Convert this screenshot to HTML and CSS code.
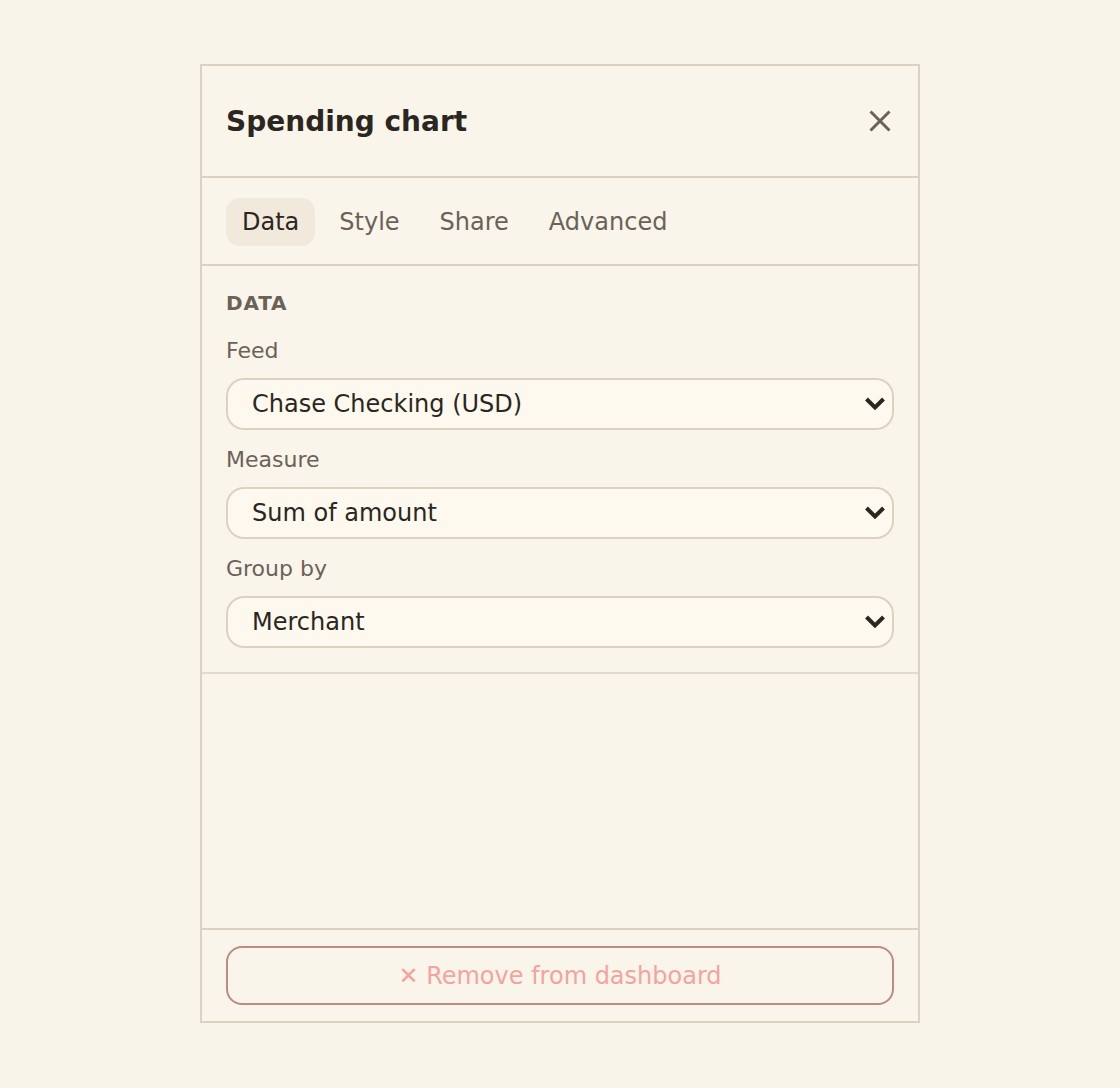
FILE: index.html
```html
<!DOCTYPE html>
<html lang="en">
<head>
    <meta charset="UTF-8">
    <meta name="viewport" content="width=device-width, initial-scale=1.0">
    <title>Spending chart</title>
    <link rel="stylesheet" href="styles.css">
</head>
<body>
    <div class="panel">
        <div class="panel-header">
            <h2>Spending chart</h2>
            <button class="close-btn" type="button" aria-label="Close">
                <svg width="28" height="28" viewBox="0 0 28 28">
                    <path d="M4.5 4.5 L23.5 23.5 M23.5 4.5 L4.5 23.5" stroke="#6b6257" stroke-width="3" fill="none"/>
                </svg>
            </button>
        </div>

        <div class="tabs">
            <button class="tab active" type="button">Data</button>
            <button class="tab" type="button">Style</button>
            <button class="tab" type="button">Share</button>
            <button class="tab" type="button">Advanced</button>
        </div>

        <div class="section">
            <div class="section-title">DATA</div>

            <div class="field">
                <label for="feed">Feed</label>
                <select id="feed">
                    <option>Chase Checking (USD)</option>
                </select>
            </div>

            <div class="field">
                <label for="measure">Measure</label>
                <select id="measure">
                    <option>Sum of amount</option>
                </select>
            </div>

            <div class="field">
                <label for="group-by">Group by</label>
                <select id="group-by">
                    <option>Merchant</option>
                </select>
            </div>
        </div>

        <div class="spacer"></div>

        <div class="panel-footer">
            <button class="remove-btn" type="button">✕ Remove from dashboard</button>
        </div>
    </div>
</body>
</html>
```

FILE: styles.css
```css
body {
    margin: 0;
    background-color: #f8f4ea;
    font-family: "DejaVu Sans", Verdana, sans-serif;
    color: #2b2620;
}
.panel {
    width: 720px;
    height: 959px;
    box-sizing: border-box;
    margin: 64px auto 0;
    border: 2px solid #ddd2c0;
    background-color: #f9f5eb;
    display: flex;
    flex-direction: column;
}
.panel-header {
    height: 112px;
    box-sizing: border-box;
    padding: 0 24px;
    display: flex;
    align-items: center;
    justify-content: space-between;
    border-bottom: 2px solid #ddd2c0;
}
.panel-header h2 {
    margin: 0;
    font-size: 28px;
    font-weight: bold;
    color: #2b2620;
}
.close-btn {
    width: 28px;
    height: 28px;
    padding: 0;
    border: none;
    background: none;
    cursor: pointer;
    display: flex;
}
.tabs {
    display: flex;
    gap: 8px;
    padding: 20px 24px 18px;
    border-bottom: 2px solid #ddd2c0;
}
.tab {
    height: 48px;
    padding: 0 16px;
    border: none;
    border-radius: 14px;
    background: none;
    font-family: inherit;
    font-size: 24px;
    color: #6b6257;
    cursor: pointer;
}
.tab.active {
    background-color: #f1e9dc;
    color: #2b2620;
}
.section {
    padding: 25px 24px 24px;
    border-bottom: 2px solid #e3dac9;
}
.section-title {
    font-size: 20px;
    line-height: 24px;
    font-weight: bold;
    letter-spacing: 0.8px;
    color: #6b6257;
    margin-bottom: 24px;
}
.field + .field {
    margin-top: 18px;
}
.field label {
    display: block;
    font-size: 22px;
    line-height: 24px;
    color: #6b6257;
    margin-bottom: 15px;
}
.field select {
    display: block;
    width: 100%;
    height: 52px;
    padding: 0 50px 0 24px;
    border: 2px solid #ddd2c0;
    border-radius: 18px;
    background-color: #fdf9ee;
    background-image: url("data:image/svg+xml,%3Csvg xmlns='http://www.w3.org/2000/svg' width='20' height='14' viewBox='0 0 20 14'%3E%3Cpath d='M1.5 2 L10 10.5 L18.5 2' stroke='%232b2620' stroke-width='4' fill='none'/%3E%3C/svg%3E");
    background-repeat: no-repeat;
    background-position: right 7px center;
    font-family: inherit;
    font-size: 24px;
    color: #2b2620;
    appearance: none;
    -webkit-appearance: none;
}
.spacer {
    flex: 1;
}
.panel-footer {
    padding: 16px 24px 16px;
    border-top: 2px solid #ddd2c0;
}
.remove-btn {
    display: block;
    width: 100%;
    height: 59px;
    border: 2px solid #c08a82;
    border-radius: 16px;
    background: none;
    font-family: inherit;
    font-size: 24px;
    color: #f4a3a0;
    cursor: pointer;
}
```
